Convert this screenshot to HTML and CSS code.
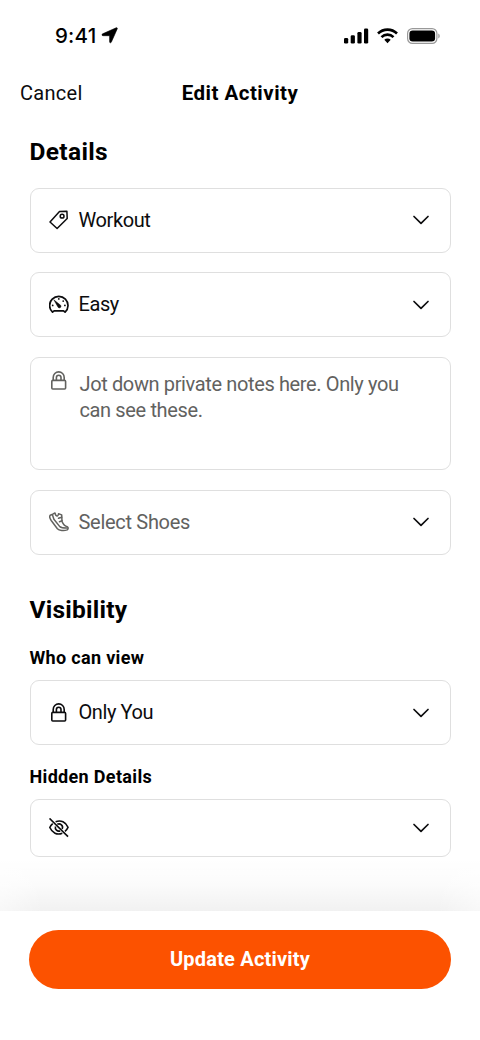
FILE: index.html
```html
<!DOCTYPE html>
<html lang="en">
<head>
<meta charset="utf-8">
<title>Edit Activity</title>
<link rel="stylesheet" href="styles.css">
</head>
<body>
<svg class="defs" width="0" height="0">
  <symbol id="chevron" viewBox="0 0 18 12"><path d="M2 2.5l7 6.800 7-6.800" fill="none" stroke="currentColor" stroke-width="1.700" stroke-linecap="round" stroke-linejoin="round"/></symbol>
  <symbol id="lock" viewBox="0 0 20 20"><g fill="none" stroke="currentColor" stroke-width="1.600"><rect x="2.800" y="9.400" width="13.800" height="8.600" rx="1"/><path d="M4.200 9.200V6.400a5.500 5.500 0 0 1 11 0v2.800M7.400 9.200V6.600a2.300 2.300 0 0 1 4.600 0v2.600"/></g></symbol>
</svg>
<div class="screen">
  <div class="status">
    <div class="clock"><span class="time">9:41</span>
      <svg width="17" height="17" viewBox="0 0 17 17"><path d="M15.200.8c.8-.3 1.400.3 1 1.100L10.400 15c-.5 1.200-1.800 1-1.800-.2V8.700H2C.7 8.700.6 7.300 1.700 6.800z" stroke="#000" stroke-width=".6"/></svg>
    </div>
    <div class="indicators">
      <svg width="25" height="16" viewBox="0 0 25 16"><rect x="0" y="10" width="4.200" height="5.500" rx="1.300"/><rect x="6.700" y="7.300" width="4.200" height="8.200" rx="1.300"/><rect x="13.400" y="4" width="4.200" height="11.500" rx="1.300"/><rect x="20" y=".5" width="4.200" height="15" rx="1.300"/></svg>
      <svg class="wifi" width="21" height="16" viewBox="0 0 21 16"><g fill="none" stroke="#000" stroke-width="2.600"><path d="M1 5.500a13.600 13.600 0 0 1 19 0"/><path d="M4.500 9.100a8.600 8.600 0 0 1 12 0"/></g><path d="M7.300 11.800a4.600 4.600 0 0 1 6.400 0L10.500 15.200z"/></svg>
      <svg class="battery" width="33" height="16" viewBox="0 0 33 16"><rect x=".6" y=".6" width="29.300" height="14.800" rx="4.800" fill="none" stroke="#999" stroke-width="1.200"/><rect x="2.400" y="2.400" width="25.700" height="11.200" rx="3.300"/><path d="M31.300 5.500c1.900.7 1.900 4.300 0 5z" fill="#999"/></svg>
    </div>
  </div>
  <header class="nav"><span class="cancel">Cancel</span><h1 class="title">Edit Activity</h1></header>
  <main class="content">
    <h2 class="heading">Details</h2>
    <div class="field">
      <svg class="icon" viewBox="0 0 20 20"><g fill="none" stroke="currentColor" stroke-width="1.500" stroke-linejoin="round"><path d="M10.500 1.500L17.900 1.200 18.200 8.500 8.100 18.500 1 12z"/><circle cx="13.100" cy="6.200" r="1.900"/></g></svg>
      <span class="value">Workout</span><svg class="chev"><use href="#chevron"/></svg>
    </div>
    <div class="field">
      <svg class="icon" viewBox="0 0 20 20"><path d="M3.500 17.200A9.200 9.200 0 1 1 16.100 17.200L14.500 15.800H5.100z" fill="none" stroke="currentColor" stroke-width="1.700" stroke-linejoin="round"/><path d="M4.800 4.800l6.200 5a1.600 1.600 0 1 1-2.100 2.100z" fill="currentColor" stroke="currentColor" stroke-width=".5"/><g fill="currentColor"><circle cx="9.800" cy="3.900" r=".9"/><circle cx="14.200" cy="6.100" r=".9"/><circle cx="3.700" cy="10.400" r=".9"/><circle cx="15.900" cy="10.400" r=".9"/></g></svg>
      <span class="value">Easy</span><svg class="chev"><use href="#chevron"/></svg>
    </div>
    <div class="field notes">
      <svg class="icon"><use href="#lock"/></svg>
      <p class="note">Jot down private notes here. Only you<br>can see these.</p>
    </div>
    <div class="field muted">
      <svg class="icon" viewBox="0 0 20 20"><g fill="none" stroke="currentColor" stroke-width="1.500" stroke-linejoin="round" stroke-linecap="round"><path d="M3.700 2.200L1.200 3.200C0 4.800.8 6.500 2.200 8.500L8.400 16.700C10.100 18.600 15 19 18.200 17.900 19.400 17 19.500 15.500 18.400 14.800 16.100 14.300 14.300 12.600 13 9.500L12.700 2.900 9.500 1.800C9.300 4 8 4.500 6.800 3.200L6 1z"/><path d="M3.500 3l1.400 4.200 5.900 7.400c1.700 1.400 4.400 1.600 7.600 1.500M9.500 6.200l3.200-1M10.500 9.700l2.600-.9"/></g></svg>
      <span class="value shoes">Select Shoes</span><svg class="chev"><use href="#chevron"/></svg>
    </div>
    <h2 class="heading visibility">Visibility</h2>
    <h3 class="label">Who can view</h3>
    <div class="field">
      <svg class="icon"><use href="#lock"/></svg>
      <span class="value">Only You</span><svg class="chev"><use href="#chevron"/></svg>
    </div>
    <h3 class="label">Hidden Details</h3>
    <div class="field short">
      <svg class="icon" viewBox="0 0 20 20"><g fill="none" stroke="currentColor" stroke-width="1.600"><path d="M.5.400L19 18.600"/><path d="M6.600 3.800C12 1.600 16.800 4.200 19 9.300c-.8 1.700-1.800 3.100-3 4.100M13.300 15.200C8 17.500 3.200 14.800.8 9.500 1.500 7.900 2.600 6.700 3.700 5.700"/><path d="M8.300 6.300a3.600 3.600 0 0 1 4.900 4.700M11.200 12.900a3.600 3.600 0 0 1-4.700-4.500"/></g></svg>
      <svg class="chev"><use href="#chevron"/></svg>
    </div>
  </main>
  <div class="shade"></div>
  <footer class="footer"><button class="update">Update Activity</button></footer>
</div>
</body>
</html>
```
FILE: styles.css
```css
* { box-sizing: border-box; }
body { margin: 0; background: #fff; color: #0c0c0e; font: 20px/26px Roboto, "Liberation Sans", sans-serif; }
h1, h2, h3, p { margin: 0; }
.defs { display: none; }
.screen { width: 480px; height: 1040px; display: flex; flex-direction: column; overflow: hidden; }
.status { height: 70px; padding: 1px 40px 0 55px; display: flex; justify-content: space-between; align-items: center; color: #000; }
.clock { display: flex; align-items: center; gap: 5px; }
.time { font: 500 20.5px/24px Inter, sans-serif; letter-spacing: .2px; padding-top: 1px; }
.indicators { display: flex; align-items: center; }
.wifi { margin-left: 8px; }
.battery { margin-left: 9px; }
.nav { height: 46px; display: grid; grid-template-columns: 1fr auto 1fr; align-items: center; padding: 0 20px; }
.cancel { letter-spacing: .3px; }
.title { font-size: 20.5px; line-height: 26px; font-weight: 700; color: #000; letter-spacing: .5px; }
.content { height: 742px; padding: 20px 29.5px 0; }
.heading { font-size: 24.5px; line-height: 32px; font-weight: 700; color: #000; margin-bottom: 19.5px; letter-spacing: .35px; }
.field { height: 65px; border: 1px solid #dfdfdf; border-radius: 9px; display: flex; align-items: center; padding: 0 19.5px 0 18px; margin-bottom: 19.7px; }
.icon { width: 20px; height: 20px; flex: none; margin-right: 10px; }
.value { letter-spacing: -.4px; padding-bottom: 1px; }
.value.shoes { letter-spacing: -.3px; }
.chev { width: 18px; height: 12px; margin-left: auto; }
.notes { height: 113px; align-items: flex-start; padding-top: 13px; color: #62625f; }
.note { padding-left: 1px; white-space: nowrap; letter-spacing: -.37px; }
.muted { color: #62625f; }
.muted .chev { color: #0c0c0e; }
.visibility { margin: 39.5px 0 20px; letter-spacing: .25px; }
.label { font-size: 18px; line-height: 24px; font-weight: 700; color: #000; margin-bottom: 10px; letter-spacing: .33px; }
.short { height: 58px; }
.shade { height: 53px; background: linear-gradient(to right, rgba(255,255,255,.5), rgba(255,255,255,0) 9%, rgba(255,255,255,0) 91%, rgba(255,255,255,.5)), linear-gradient(to bottom, rgba(0,0,0,0), rgba(0,0,0,.016) 50%, rgba(0,0,0,.055)); }
.footer { height: 129px; padding: 19px 29px; background: #fff; }
.update { display: block; width: 422px; height: 59px; padding: 0 0 1px; border: 0; border-radius: 30px; background: #fc5200; color: #fff; font: 700 20px/26px Roboto, sans-serif; letter-spacing: .2px; }
```
